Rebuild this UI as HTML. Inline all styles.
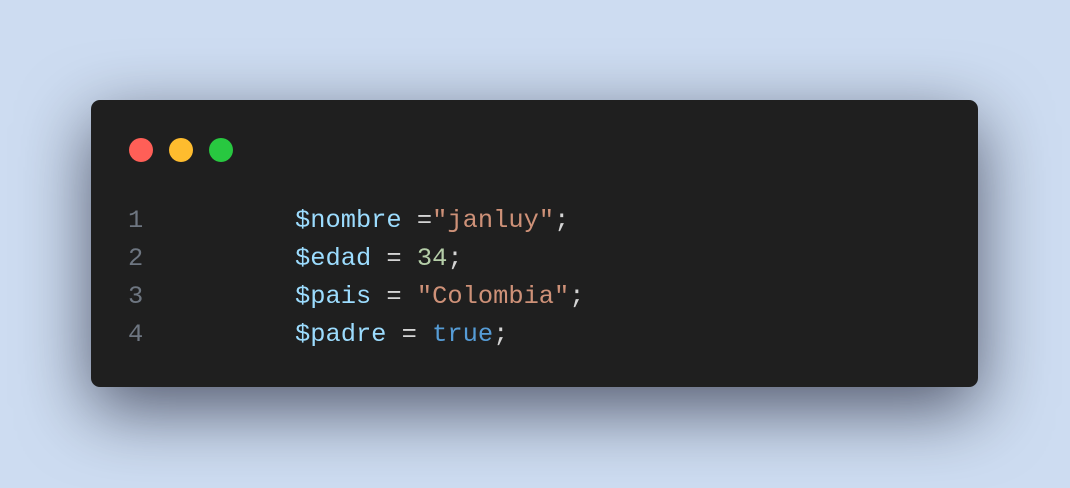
<!DOCTYPE html>
<html><head><style>
html,body{margin:0;padding:0;}
body{width:1070px;height:488px;background:#cddcf1;position:relative;overflow:hidden;font-family:"Liberation Mono",monospace;}
.card{position:absolute;left:91px;top:100px;width:887px;height:287px;background:#1f1f1f;border-radius:9px;box-shadow:0 22px 70px rgba(0,0,20,0.6);}
.dot{position:absolute;top:138px;width:24px;height:24px;border-radius:50%;}
.line{position:absolute;left:0;height:38px;line-height:38px;font-size:25.4px;white-space:pre;}
.n{position:absolute;left:128px;color:#6e7681;}
.c{position:absolute;left:295px;color:#d4d4d4;}
.v{color:#9cdcfe}.s{color:#ce9178}.num{color:#b5cea8}.k{color:#569cd6}
</style></head><body>
<div class="card"></div>
<div class="dot" style="left:129px;background:#ff5f57"></div>
<div class="dot" style="left:169px;background:#febc2e"></div>
<div class="dot" style="left:209px;background:#28c840"></div>
<div class="line" style="top:202px"><span class="n">1</span><span class="c"><span class="v">$nombre</span> =<span class="s">"janluy"</span>;</span></div>
<div class="line" style="top:240px"><span class="n">2</span><span class="c"><span class="v">$edad</span> = <span class="num">34</span>;</span></div>
<div class="line" style="top:278px"><span class="n">3</span><span class="c"><span class="v">$pais</span> = <span class="s">"Colombia"</span>;</span></div>
<div class="line" style="top:316px"><span class="n">4</span><span class="c"><span class="v">$padre</span> = <span class="k">true</span>;</span></div>
</body></html>
